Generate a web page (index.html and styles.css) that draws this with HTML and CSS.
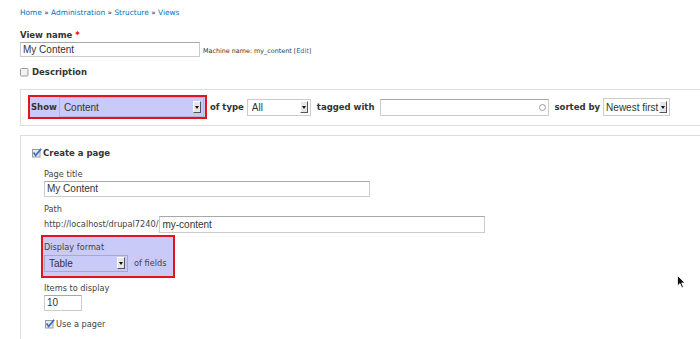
FILE: index.html
```html
<!DOCTYPE html>
<html lang="en">
<head>
  <meta charset="UTF-8"/>
  <title>Add new view</title>
  <link rel="stylesheet" href="styles.css">
</head>
<body>
  <div class="breadcrumb">
    <a href="#">Home</a> » <a href="#">Administration</a> » <a href="#">Structure</a> » <a href="#">Views</a>
  </div>

  <div class="name-item">
    <label class="label-bold" for="view-name">View name <span class="req">*</span></label>
    <div class="name-row">
      <input type="text" class="text name-input" id="view-name" value="My Content"/>
      <span class="machine">Machine name: my_content [<a href="#">Edit</a>]</span>
    </div>
  </div>

  <div class="check-row desc-row">
    <svg class="cb" width="9" height="9" viewBox="0 0 9 9"><rect x="0.5" y="0.5" width="7.5" height="7.5" rx="1" fill="#f3f3f3" stroke="#9a9a9a"/></svg>
    <span class="label-bold">Description</span>
  </div>

  <div class="panel">
    <div class="filters">
      <div class="show-box">
        <span class="label-bold">Show</span>
        <span class="select">
          <select class="sel sel-show"><option>Content</option></select>
          <span class="select-btn"></span>
        </span>
      </div>
      <span class="label-bold filter-label first">of type</span>
      <span class="select">
        <select class="sel sel-type"><option>All</option></select>
        <span class="select-btn"></span>
      </span>
      <span class="label-bold filter-label">tagged with</span>
      <span class="search">
        <input type="text" class="text tag-input"/>
        <span class="throbber"></span>
      </span>
      <span class="label-bold filter-label">sorted by</span>
      <span class="select">
        <select class="sel sel-sort"><option>Newest first</option></select>
        <span class="select-btn"></span>
      </span>
    </div>
  </div>

  <div class="panel page-panel">
    <div class="check-row">
      <svg class="cb" width="10" height="10" viewBox="0 0 10 10"><rect x="0.5" y="1.5" width="7.5" height="7.5" fill="#e9e9e9" stroke="#9a9a9a"/><path d="M1.6 4.6 L3.7 7.4 L9.2 0.8" fill="none" stroke="#3471c4" stroke-width="1.7"/></svg>
      <span class="label-bold">Create a page</span>
    </div>

    <div class="page-fields">
      <label class="field-label title-label">Page title</label>
      <input type="text" class="text title-input" value="My Content"/>

      <label class="field-label path-label">Path</label>
      <div class="path-row">
        <span class="field-label">http://localhost/drupal7240/</span>
        <input type="text" class="text path-input" value="my-content"/>
      </div>

      <div class="format-box">
        <label class="field-label">Display format</label>
        <div class="format-row">
          <span class="select">
            <select class="sel sel-format"><option>Table</option></select>
            <span class="select-btn"></span>
          </span>
          <span class="field-label of-fields">of fields</span>
        </div>
      </div>

      <label class="field-label items-label">Items to display</label>
      <input type="text" class="text items-input" value="10"/>

      <div class="check-row pager-row">
        <svg class="cb" width="10" height="10" viewBox="0 0 10 10"><rect x="0.5" y="1.5" width="7.5" height="7.5" fill="#e9e9e9" stroke="#9a9a9a"/><path d="M1.6 4.6 L3.7 7.4 L9.2 0.8" fill="none" stroke="#3471c4" stroke-width="1.7"/></svg>
        <span class="field-label">Use a pager</span>
      </div>
    </div>
  </div>

  <svg class="cursor" width="9" height="14" viewBox="0 0 9 14"><path d="M0.5 0.5 L0.5 11 L3 8.6 L4.8 12.8 L6.4 12 L4.7 8 L8 8 Z" fill="#111" stroke="#fff" stroke-width="0.8"/></svg>
</body>
</html>
```

FILE: styles.css
```css
* {
  box-sizing: border-box;
  margin: 0;
  padding: 0;
}

body {
  font-family: "DejaVu Sans", Verdana, sans-serif;
  color: #333;
  background: #fff;
  padding: 8px 0 0 20px;
  overflow: hidden;
  height: 339px;
}

a {
  color: #0074bd;
  text-decoration: none;
}

.breadcrumb {
  font-size: 7.4px;
  line-height: 10px;
}

.label-bold {
  display: block;
  font-weight: bold;
  font-size: 8.5px;
  line-height: 11px;
}

.field-label {
  display: block;
  font-size: 8.2px;
  line-height: 11px;
  color: #444;
}

.req {
  color: #e00;
}

.name-item {
  margin-top: 12px;
}

.name-row {
  display: flex;
  align-items: center;
  margin-top: 1px;
}

input.text {
  font-family: "Liberation Sans", Arial, sans-serif;
  font-size: 10px;
  color: #333;
  background: #fff;
  border: 1px solid #ccc;
  border-top-color: #a8a8a8;
  padding: 0 2px;
  outline: none;
}

.name-input {
  width: 180px;
  height: 15px;
}

.machine {
  font-size: 6.4px;
  margin: 3px 0 0 3px;
}

.check-row {
  display: flex;
  align-items: center;
}

.desc-row {
  margin-top: 9.5px;
}

.desc-row .cb {
  margin-right: 3px;
}

/* panels */
.panel {
  border: 1px solid #ddd;
  border-right: none;
  margin-top: 11.5px;
}

.filters {
  display: flex;
  align-items: center;
  padding: 5px 0 6px 7px;
}

.show-box {
  display: flex;
  align-items: center;
  height: 24px;
  border: 2px solid #e3141c;
  background: #cacaf8;
  padding: 0 1px;
}

.show-box .label-bold {
  margin-right: 2px;
}

.select {
  position: relative;
  display: inline-block;
}

.sel {
  appearance: none;
  -webkit-appearance: none;
  display: block;
  font-family: "Liberation Sans", Arial, sans-serif;
  font-size: 10px;
  color: #333;
  background: #fff;
  border: 1px solid #ccc;
  padding: 0 4px;
  outline: none;
}

.select-btn {
  position: absolute;
  right: 3px;
  top: 50%;
  margin-top: -6px;
  width: 8px;
  height: 12px;
  background: #e6e6e6;
  border-top: 1px solid #fff;
  border-left: 1px solid #fff;
  border-right: 1px solid #555;
  border-bottom: 1px solid #555;
}

.select-btn::after {
  content: "";
  position: absolute;
  left: 1px;
  top: 4px;
  border-left: 2px solid transparent;
  border-right: 2px solid transparent;
  border-top: 3px solid #111;
}

.sel-show {
  width: 145px;
  height: 20px;
  background: #cacaf8;
  border-color: #b4b4dc;
}

.sel-type {
  width: 64px;
  height: 17px;
}

.sel-sort {
  width: 67px;
  height: 18px;
  padding: 0 2px;
}

.filter-label {
  margin: 0 3px 0 6px;
}

.filter-label.first {
  margin-left: 3px;
}

.search {
  position: relative;
  display: inline-block;
  margin-left: 2px;
}

.tag-input {
  display: block;
  width: 169px;
  height: 17px;
}

.throbber {
  position: absolute;
  right: 3px;
  top: 5px;
  width: 7px;
  height: 7px;
  border: 1px solid #9a9a9a;
  border-radius: 50%;
}

.page-panel {
  margin-top: 9px;
  padding: 11.5px 0 10px 11px;
  border-bottom: none;
}

.page-panel > .check-row .cb {
  margin-right: 1px;
}

.page-fields {
  padding-left: 12px;
}

.title-label {
  margin-top: 10px;
}

.title-input {
  display: block;
  margin-top: 1px;
  width: 326px;
  height: 16px;
}

.path-label {
  margin-top: 7px;
}

.path-row {
  display: flex;
  align-items: center;
  margin-top: 1px;
}

.path-input {
  margin-left: 1px;
  width: 326px;
  height: 17px;
}

.format-box {
  width: 134px;
  margin: 2px 0 0 -3px;
  border: 2px solid #e3141c;
  background: #cacaf8;
  padding: 5px 0 4px 1px;
}

.format-row {
  display: flex;
  align-items: center;
  margin-top: 2px;
}

.sel-format {
  width: 84px;
  height: 17px;
  background: #cacaf8;
  border-color: #a9a9c8;
}

.of-fields {
  margin-left: 6px;
}

.items-label {
  margin-top: 5px;
}

.items-input {
  display: block;
  margin-top: 1px;
  width: 38px;
  height: 16px;
}

.pager-row {
  margin-top: 8px;
  padding-left: 1px;
}

.pager-row .cb {
  margin-right: 1px;
}

.cursor {
  position: absolute;
  left: 677px;
  top: 275px;
}
```
